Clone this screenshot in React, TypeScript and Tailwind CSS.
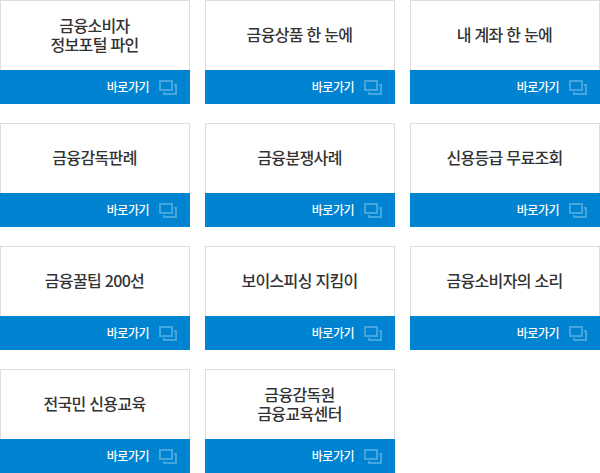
interface Shortcut {
    id: number;
    lines: string[];
}

const shortcuts: Shortcut[] = [
    { id: 1, lines: ["금융소비자", "정보포털 파인"] },
    { id: 2, lines: ["금융상품 한 눈에"] },
    { id: 3, lines: ["내 계좌 한 눈에"] },
    { id: 4, lines: ["금융감독판례"] },
    { id: 5, lines: ["금융분쟁사례"] },
    { id: 6, lines: ["신용등급 무료조회"] },
    { id: 7, lines: ["금융꿀팁 200선"] },
    { id: 8, lines: ["보이스피싱 지킴이"] },
    { id: 9, lines: ["금융소비자의 소리"] },
    { id: 10, lines: ["전국민 신용교육"] },
    { id: 11, lines: ["금융감독원", "금융교육센터"] },
];

function NewWindowIcon() {
    return (
        <svg width="18" height="15" viewBox="0 0 18 15" fill="none" stroke="#45a5de" strokeWidth="2" aria-hidden="true">
            <rect x="1" y="1" width="12" height="9" />
            <path d="M15 5h2v9H5v-2" />
        </svg>
    );
}

function ShortcutCard({ lines }: { lines: string[] }) {
    return (
        <a href="#" className="flex h-[104px] flex-col">
            <strong className="flex h-[70px] flex-col items-center justify-center border border-b-0 border-[#ddd] bg-white pr-px pb-[2px] text-[16px] leading-[19px] font-medium tracking-[-0.65px] text-[#333] [word-spacing:0.7px]">
                {lines.map((line) => <span key={line}>{line}</span>)}
            </strong>
            <span className="flex h-[34px] items-center justify-end gap-[10px] bg-[#0084d1] pr-[13px] text-[12px] font-medium tracking-[-0.5px] text-white">
                바로가기
                <NewWindowIcon />
            </span>
        </a>
    );
}

export default function App() {
    return (
        <main className="h-[473px] w-[600px] bg-white font-['Noto_Sans_CJK_KR',sans-serif]">
            <div className="grid grid-cols-[190px_190px_190px] gap-x-[15px] gap-y-[19px]">
                {shortcuts.map((item) => <ShortcutCard key={item.id} lines={item.lines} />)}
            </div>
        </main>
    );
}
